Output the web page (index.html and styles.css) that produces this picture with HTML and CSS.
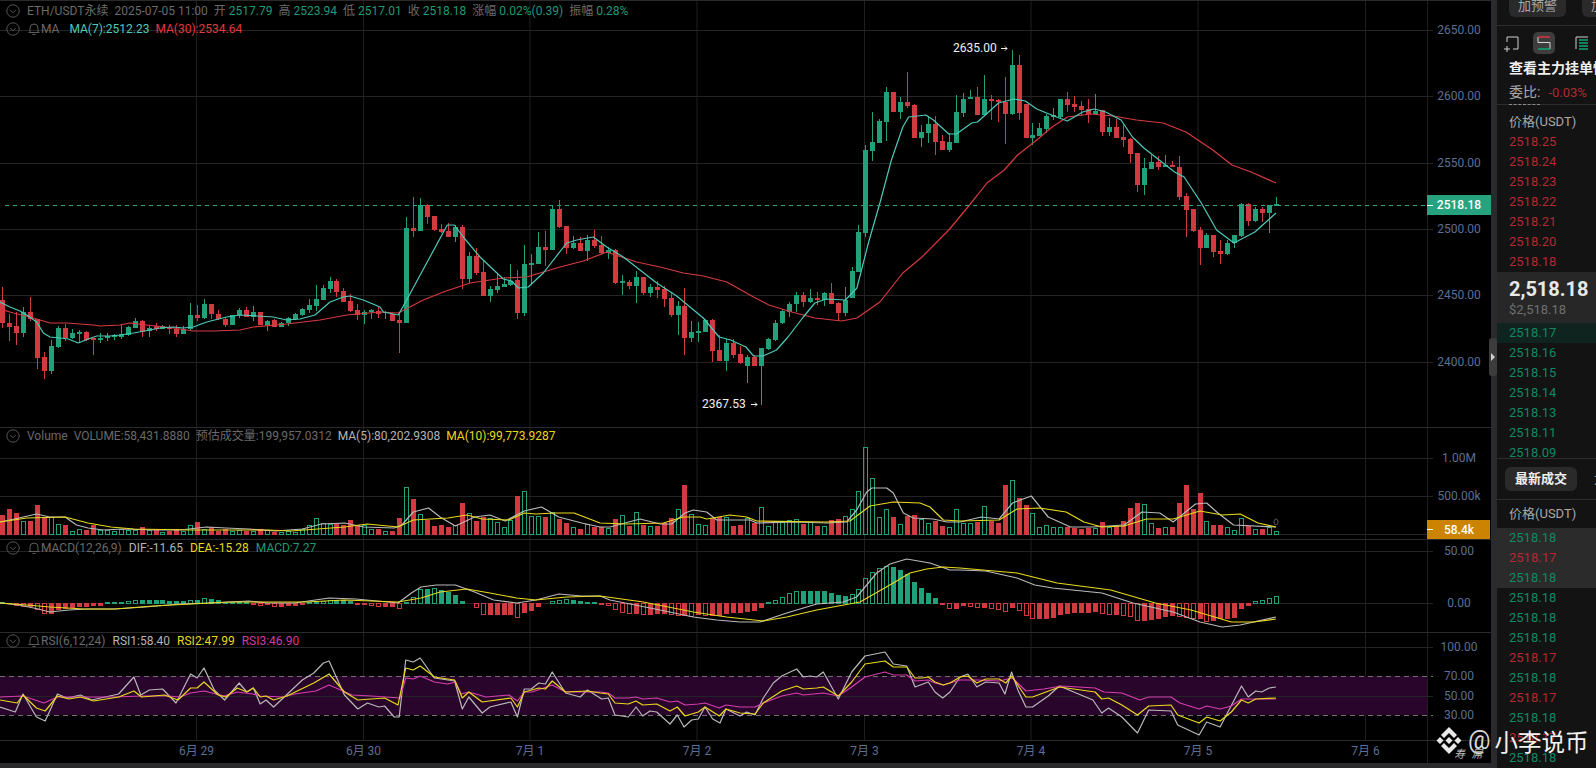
FILE: index.html
```html
<!DOCTYPE html>
<html lang="zh-CN">
<head>
<meta charset="utf-8">
<title>ETH/USDT永续</title>
<link rel="stylesheet" href="styles.css">
</head>
<body>
<svg class="sprite" aria-hidden="true">
  <symbol id="chev" viewBox="0 0 14 14"><circle cx="7" cy="7" r="6.2" fill="none" stroke="#565656"/><path d="M4 5.8 7 8.8 10 5.8" fill="none" stroke="#565656"/></symbol>
  <symbol id="bell" viewBox="0 0 14 14"><path d="M1.5 10.5h11M3 10.5V6a4 4 0 0 1 8 0v4.500M5.500 12.500h3" fill="none" stroke="#5e5e5e"/></symbol>
</svg>
<div class="app">
  <main class="chart">
    <section class="pane pane-main">
      <svg class="plot" id="plot-main"></svg>
      <div class="legend">
        <div class="legend-row legend-row-ohlc">
          <svg class="ico"><use href="#chev"/></svg>
          <span class="lbl">ETH/USDT永续</span>
          <span class="lbl">2025-07-05 11:00</span>
          <span class="lbl">开 <b class="up">2517.79</b></span>
          <span class="lbl">高 <b class="up">2523.94</b></span>
          <span class="lbl">低 <b class="up">2517.01</b></span>
          <span class="lbl">收 <b class="up">2518.18</b></span>
          <span class="lbl">涨幅 <b class="up">0.02%(0.39)</b></span>
          <span class="lbl">振幅 <b class="up">0.28%</b></span>
        </div>
        <div class="legend-row">
          <svg class="ico"><use href="#chev"/></svg>
          <svg class="ico ico-bell"><use href="#bell"/></svg>
          <span class="lbl lbl-ma">MA</span>
          <span class="teal">MA(7):2512.23</span>
          <span class="red">MA(30):2534.64</span>
        </div>
      </div>
    </section>
    <section class="pane pane-vol">
      <svg class="plot" id="plot-vol"></svg>
      <div class="legend legend-sub">
        <div class="legend-row legend-row-ohlc">
          <svg class="ico"><use href="#chev"/></svg>
          <span class="lbl">Volume</span>
          <span class="lbl">VOLUME:58,431.8880</span>
          <span class="lbl">预估成交量:199,957.0312</span>
          <span class="white">MA(5):80,202.9308</span>
          <span class="yellow">MA(10):99,773.9287</span>
        </div>
      </div>
    </section>
    <section class="pane pane-macd">
      <svg class="plot" id="plot-macd"></svg>
      <div class="legend legend-sub">
        <div class="legend-row">
          <svg class="ico"><use href="#chev"/></svg>
          <svg class="ico ico-bell"><use href="#bell"/></svg>
          <span class="lbl">MACD(12,26,9)</span>
          <span class="white">DIF:-11.65</span>
          <span class="yellow">DEA:-15.28</span>
          <span class="up">MACD:7.27</span>
        </div>
      </div>
    </section>
    <section class="pane pane-rsi">
      <svg class="plot" id="plot-rsi"></svg>
      <div class="legend legend-sub">
        <div class="legend-row">
          <svg class="ico"><use href="#chev"/></svg>
          <svg class="ico ico-bell"><use href="#bell"/></svg>
          <span class="lbl">RSI(6,12,24)</span>
          <span class="white">RSI1:58.40</span>
          <span class="yellow">RSI2:47.99</span>
          <span class="pink">RSI3:46.90</span>
        </div>
      </div>
    </section>
    <section class="pane-time">
      <svg class="plot" id="plot-time"></svg>
    </section>
  </main>

  <aside class="panel">
    <div class="tools">
      <button class="tool-btn">加预警</button>
      <button class="tool-btn">加预警</button>
    </div>
    <div class="views">
      <svg class="view-ico" viewBox="0 0 22 22"><path d="M5 5h11v12h-5M5 5v5M5 14v6M2 17h6" fill="none" stroke="#cfcfcf" stroke-width="1"/></svg>
      <span class="view-on">
        <svg class="view-ico" viewBox="0 0 22 22"><path d="M5 10.500V5M5 10.500h12M17 10.500V17" fill="none" stroke="#d8d8d8"/><path d="M5 5h12" fill="none" stroke="#d9363c" stroke-width="1.500"/><path d="M5 17h12" fill="none" stroke="#12a777" stroke-width="1.500"/></svg>
      </span>
      <svg class="view-ico view-last" viewBox="0 0 22 22"><path d="M5 5h12M5 5v12" fill="none" stroke="#cfcfcf"/><path d="M8 8h9M8 11h9M8 14h9M8 17h9" fill="none" stroke="#12a777" stroke-width="1.300"/></svg>
    </div>
    <div class="book-title">查看主力挂单情况</div>
    <div class="ratio"><span class="ratio-lbl">委比:</span><span class="ask">-0.03%</span></div>
    <div class="col-head col-head-book">价格(USDT)</div>
    <ul class="rows">
      <li class="ask">2518.25</li>
      <li class="ask">2518.24</li>
      <li class="ask">2518.23</li>
      <li class="ask">2518.22</li>
      <li class="ask">2518.21</li>
      <li class="ask">2518.20</li>
      <li class="ask">2518.18</li>
    </ul>
    <div class="mid">
      <div class="mid-price">2,518.18</div>
      <div class="mid-usd">$2,518.18</div>
    </div>
    <ul class="rows rows-bid">
      <li class="bid bid-top">2518.17</li>
      <li class="bid">2518.16</li>
      <li class="bid">2518.15</li>
      <li class="bid">2518.14</li>
      <li class="bid">2518.13</li>
      <li class="bid">2518.11</li>
      <li class="bid">2518.09</li>
    </ul>
    <div class="tabs"><span class="tab-on">最新成交</span><span class="tab-next">大额成交</span></div>
    <div class="col-head col-head-trades">价格(USDT)</div>
    <ul class="rows">
      <li class="bid hl">2518.18</li>
      <li class="ask hl">2518.17</li>
      <li class="bid hl">2518.18</li>
      <li class="bid">2518.18</li>
      <li class="bid">2518.18</li>
      <li class="bid">2518.18</li>
      <li class="ask">2518.17</li>
      <li class="bid">2518.18</li>
      <li class="ask">2518.17</li>
      <li class="bid">2518.18</li>
      <li class="ask">2518.17</li>
      <li class="bid">2518.18</li>
    </ul>
  </aside>

  <div class="handle"><i class="handle-arrow"></i></div>

  <div class="watermark">
    <svg class="wm-logo" viewBox="0 0 28 28"><path d="M14 0l8 8-3 3-5-5-5 5-3-3zM5 10l3.500 3.500L5 17l-3.500-3.500zM23 10l3.500 3.500L23 17l-3.500-3.500zM14 10l3.500 3.500L14 17l-3.500-3.500zM9 16l5 5 5-5 3 3-8 8-8-8z" fill="#e8e8e8"/></svg>
    <span class="wm-at">@</span>
    <span class="wm-name">小李说币</span>
    <span class="wm-sub">寿 屌</span>
  </div>
</div>
<script src="chart.js"></script>
</body>
</html>
```
FILE: styles.css
```css
* { box-sizing: border-box; }
html, body { margin: 0; padding: 0; background: #2a2a2c; }
body { width: 1596px; height: 768px; overflow: hidden; font-family: Roboto, "Noto Sans CJK SC", sans-serif; font-size: 12px; }
.sprite { position: absolute; width: 0; height: 0; }

.app { position: relative; display: flex; width: 1596px; height: 768px; gap: 6px; background: #2a2a2c; }

/* chart */
.chart { display: flex; flex-direction: column; width: 1491px; height: 763px; background: #000; border-top: 1px solid #2a2a2c; }
.pane { position: relative; border-bottom: 1px solid #2a2a2c; }
.pane-main { height: 427px; }
.pane-vol { height: 112px; }
.pane-macd { height: 93px; }
.pane-rsi { height: 108px; }
.pane-time { position: relative; height: 22px; }
.plot { position: absolute; left: 0; top: 0; width: 1491px; height: 100%; display: block; }

.legend { position: absolute; left: 6px; top: 1px; display: flex; flex-direction: column; line-height: 18px; white-space: nowrap; }
.legend-sub { top: -1px; }
.legend-row { display: flex; align-items: center; gap: 7px; height: 18px; }
.legend-row-ohlc { gap: 6px; }
.legend-row-ohlc .ico { margin-right: 1px; }
.ico { width: 14px; height: 14px; flex: none; }
.ico-bell { margin-right: -7px; }
.lbl { color: #6a6a6a; }
.lbl-ma { margin-right: 3px; }
.legend b { font-weight: 400; }
.up { color: #1f9a75; }
.teal { color: #4fc9ba; margin-right: -1px; }
.red { color: #e0393e; }
.white { color: #b5b5b5; }
.yellow { color: #e9d91c; }
.pink { color: #d13aa6; }

/* svg text */
.axis-text { font: 12px Roboto, "Noto Sans CJK SC", sans-serif; fill: #5c6f94; text-anchor: middle; dominant-baseline: central; }
.tag-text { font: 500 12px Roboto, sans-serif; fill: #fff; text-anchor: middle; dominant-baseline: central; }
.note-text { font: 12px Roboto, sans-serif; fill: #f2f2f2; dominant-baseline: central; }

/* panel */
.panel { width: 99px; height: 768px; background: #131313; overflow: hidden; white-space: nowrap; color: #a8a8a8; font-size: 13px; }
.tools { display: flex; gap: 16px; height: 26px; padding: 0 0 8px 12px; border-bottom: 1px solid #2e2e2e; align-items: flex-end; }
.tool-btn { flex: none; width: 57px; height: 28px; margin: 0; padding: 3px 0 0; border: 0; border-radius: 6px; background: #2a2a2a; color: #a8a8a8; font: 13px Roboto, "Noto Sans CJK SC", sans-serif; }
.views { display: flex; align-items: center; height: 30px; padding: 4px 0 0 5px; gap: 9px; }
.view-ico { width: 22px; height: 22px; display: block; flex: none; }
.view-last { margin-left: 7px; }
.view-on { width: 22px; height: 22px; border-radius: 5px; background: #3d3d3d; flex: none; }
.book-title { height: 24px; line-height: 24px; padding-left: 12px; color: #f0f0f0; font-size: 14px; font-weight: 700; }
.ratio { display: flex; align-items: center; gap: 8px; height: 25px; padding-left: 12px; border-bottom: 1px solid #2e2e2e; }
.ratio-lbl { font-size: 14px; color: #a8a8a8; height: 25px; line-height: 24px; border-bottom: 1px dashed #8a8a8a; }
.col-head { padding-left: 12px; line-height: 20px; color: #a8a8a8; }
.col-head-book { padding-top: 7px; }
.col-head-trades { height: 28px; padding-top: 4px; }
.rows { list-style: none; margin: 0; padding: 0; }
.rows li { height: 20px; line-height: 20px; padding-left: 12px; }
.ask { color: #b22a30; }
.bid { color: #0e8a62; }
.hl { background: #2b2b2b; }
.mid { height: 51px; padding: 5px 0 0 12px; background: #272727; }
.mid-price { font-size: 20px; font-weight: 700; line-height: 24px; color: #e8e8e8; }
.mid-usd { font-size: 13px; line-height: 18px; color: #6f6f6f; }
.rows-bid { height: 135px; overflow: hidden; }
.bid-top { background: #0f241e; }
.tabs { display: flex; gap: 17px; height: 42px; padding: 8px 0 0 8px; border-top: 1px solid #2e2e2e; border-bottom: 1px solid #2e2e2e; }
.tab-on { flex: none; width: 72px; height: 24px; line-height: 24px; text-align: center; border-radius: 6px; background: #2a2a2a; color: #f0f0f0; font-weight: 700; }
.tab-next { flex: none; line-height: 24px; color: #a8a8a8; }

/* collapse handle */
.handle { position: absolute; left: 1489px; top: 338px; width: 8px; height: 38px; border-radius: 3px; background: #3c3c3c; display: flex; align-items: center; justify-content: center; }
.handle-arrow { width: 0; height: 0; border-style: solid; border-width: 4px 0 4px 4px; border-color: transparent transparent transparent #d0d0d0; }

/* watermark */
.watermark { position: absolute; left: 1435px; top: 727px; width: 160px; height: 34px; display: flex; align-items: flex-start; color: #f2f2f2; font-family: "Noto Sans CJK SC", sans-serif; }
.wm-logo { width: 28px; height: 28px; flex: none; }
.wm-at { margin-left: 5px; font: 25px/28px Roboto, sans-serif; color: #d8d8d8; }
.wm-name { margin-left: 4px; font-size: 23.500px; line-height: 28px; }
.wm-sub { position: absolute; left: 19px; top: 19px; font-size: 11px; line-height: 14px; font-style: italic; color: #bdbdbd; letter-spacing: 2px; }
```
FILE: chart.js
```js
// Hourly candles traced from the reference: [green?, wickTop, bodyTop, bodyBottom, wickBottom] in page pixels.
var candles = [
[0,287,300,323,328],[0,314,323,327,341],[0,312,326,333,345],[1,307,312,333,337],[0,297,312,319,321],[0,319,319,358,369],[0,352,357,371,379],[1,340,346,371,374],
[1,326,328,347,348],[0,324,328,338,341],[1,329,333,338,339],[1,330,332,334,343],[0,331,332,340,341],[0,338,338,340,355],[1,333,338,340,343],[1,333,336,338,341],
[1,334,335,337,340],[1,325,334,337,339],[1,326,327,335,336],[1,318,321,328,328],[0,320,321,332,337],[1,325,328,331,337],[0,323,326,329,331],[1,325,326,329,329],
[0,325,327,329,334],[0,325,329,334,337],[1,326,329,334,334],[1,303,315,329,331],[0,305,315,318,321],[1,299,304,318,319],[0,304,304,314,319],[0,310,314,319,320],
[0,317,319,325,327],[1,315,315,325,325],[1,308,310,315,318],[0,307,310,317,317],[1,306,312,317,321],[0,312,312,325,325],[1,320,321,325,331],[0,319,320,327,327],
[1,322,323,327,327],[1,317,318,323,326],[1,313,314,319,320],[1,308,309,315,316],[1,299,305,310,313],[1,285,299,306,311],[1,285,288,300,300],[1,277,281,289,293],
[0,279,281,292,297],[0,288,291,302,302],[0,294,301,311,312],[0,304,310,315,320],[1,310,312,315,324],[1,309,310,312,319],[0,307,311,314,318],[1,311,312,313,319],
[0,313,314,321,321],[0,313,320,323,353],[1,217,228,323,323],[0,197,228,231,237],[1,198,205,231,231],[0,204,205,217,224],[0,216,216,230,231],[0,224,229,232,233],
[0,223,231,237,237],[1,225,227,237,242],[0,225,227,279,289],[1,252,256,279,283],[0,248,256,273,275],[0,261,272,296,296],[1,286,289,296,302],[1,273,286,290,293],
[1,277,284,287,287],[1,264,281,285,286],[0,270,280,313,319],[1,245,264,313,316],[1,254,263,265,285],[1,232,247,264,264],[0,231,247,250,266],[1,206,209,250,250],
[0,200,209,227,228],[0,226,226,248,254],[1,236,243,248,249],[0,237,243,251,251],[1,235,240,251,261],[0,230,240,246,248],[0,236,245,253,255],[1,247,250,253,259],
[0,249,250,283,284],[1,275,281,283,295],[0,280,282,286,289],[1,271,277,286,303],[0,277,277,293,295],[1,284,287,293,297],[0,281,287,290,298],[0,286,289,299,307],
[0,293,298,315,317],[1,301,306,315,335],[0,288,306,338,355],[1,321,332,338,342],[1,322,331,333,342],[1,319,320,332,332],[0,319,320,351,362],[0,335,350,361,361],
[1,339,343,361,371],[0,339,343,355,358],[0,346,354,363,364],[1,355,357,366,383],[0,355,357,366,366],[1,348,348,366,405],[1,338,339,349,350],[1,320,323,340,341],
[1,309,311,323,324],[1,302,304,312,317],[1,292,295,304,312],[0,292,295,302,307],[1,289,298,302,303],[0,292,298,300,305],[1,292,293,300,306],[0,283,293,304,304],
[0,302,303,313,321],[1,287,300,313,316],[1,267,271,298,298],[1,225,232,272,272],[1,145,150,233,237],[1,112,142,151,161],[1,119,121,143,143],[1,87,92,122,141],
[0,92,92,112,112],[1,97,102,112,119],[0,72,102,106,108],[0,104,105,138,138],[1,125,132,138,147],[1,116,124,133,143],[0,116,124,142,155],[0,135,141,150,150],
[1,133,142,150,152],[1,95,112,143,143],[1,93,99,113,117],[1,90,97,99,99],[0,87,97,115,115],[1,75,99,115,115],[0,95,99,101,120],[0,99,100,102,122],
[0,77,102,114,144],[1,50,65,114,115],[0,55,65,113,120],[0,104,104,138,138],[1,123,135,138,145],[1,123,128,136,136],[1,114,116,129,133],[1,108,115,117,120],
[1,99,99,117,119],[0,92,99,105,112],[0,96,104,107,112],[0,101,106,110,116],[0,99,109,114,123],[1,94,111,114,114],[0,110,110,132,136],[1,118,127,132,136],
[0,119,127,138,138],[0,125,137,140,147],[0,138,139,154,163],[0,153,153,185,192],[1,158,168,185,195],[1,155,162,169,169],[0,156,162,167,170],[1,155,165,167,167],
[0,161,165,167,167],[0,156,167,197,200],[0,193,196,210,237],[0,209,209,231,232],[0,227,230,248,265],[1,233,235,248,248],[0,235,235,252,257],[0,240,251,254,264],
[1,240,243,254,255],[1,235,235,243,248],[1,203,204,236,237],[0,203,204,221,226],[1,207,209,221,222],[0,207,209,213,222],[1,205,205,213,233],[1,197,204,206,206]
];

// Volume bar tops (page y), base at 534.
var volTop = [515,509,513,521,521,505,517,517,524,525,531,529,530,525,530,530,531,529,530,530,527,530,530,532,531,529,531,525,522,529,527,531,529,531,530,531,531,529,530,532,
532,531,532,529,525,518,523,524,523,525,520,525,525,529,529,531,531,518,487,499,514,520,526,525,527,525,503,513,521,517,518,522,527,520,496,491,516,516,517,512,519,523,527,529,524,527,
527,528,519,515,526,512,525,526,526,523,518,509,485,514,524,525,518,517,517,526,525,518,523,507,526,521,522,520,519,524,522,526,526,520,519,516,509,491,447,478,517,509,517,524,516,515,519,523,521,526,527,509,
523,523,522,506,521,523,485,480,498,505,513,527,525,527,527,527,528,529,528,528,522,527,526,521,508,503,504,523,528,527,527,503,485,509,493,521,525,525,527,530,518,526,529,529,527,531];

// MACD histogram in pixels from the zero line (positive is up).
var hist = [1,.5,-2,-3,-3,-6,-10,-10,-6,-5,-4,-3,-3,-2,-1.5,1,1,1,2,3,3,3,3,3,2,2,2,3,3,5,4,3,1,1,1,1,-1,-2,-1,-3,-3,-2,-2,-1,1,1,2,3,3,3,
2,-1,-1,-2,-3,-3,-3,-5,1,6,14,14,15,13,11,8,2,0,-4,-11,-11,-11,-11,-11,-14,-9,-7,-3,0,2,3,4,3,2,1,1,-1,-2,
-6,-9,-10,-10,-11,-11,-10,-10,-11,-12,-12,-13,-11,-12,-12,-12,-10,-9,-9,-8,-7,-4,1,3,6,10,12,12,12,12,12,10,8,7,9,14,25,31,35,37,36,33,29,21,15,10,5,-1,-5,-5,
-2,-3,-4,-4,-5,-6,-8,-4,-7,-12,-15,-15,-15,-14,-11,-10,-9,-9,-9,-8,-10,-11,-11,-12,-13,-17,-17,-16,-15,-13,-12,-13,-14,-15,-15,-18,-17,-15,-15,-14,-5,-2,2,3,5,7];

// Traced line samples: each run is [xOrigin, xScale, x,y, x,y, ...].
function line() {
  var out = [];
  for (var a = 0; a < arguments.length; a++) {
    var r = arguments[a];
    for (var k = 2; k < r.length; k += 2) out.push((r[0] + r[k] / r[1]).toFixed(1) + ',' + r[k + 1]);
  }
  return out.join(' ');
}

var ma7 = line(
  [0,3, 0,302,30,307,60,311,85,316,110,322,130,333,150,337,180,338,205,339,235,343,265,339,290,336,330,336,360,335,400,333,450,330,480,328,520,327,550,328,580,327,620,322,680,317,720,315,770,316,820,317,860,320,900,319,945,315,990,302,1030,297,1050,296,1090,300,1140,307],
  [370,3, 40,312,85,315,105,303,232,225,253,225,280,237,330,257,400,279,425,281,445,288,475,287,520,273,590,243,620,240,670,237,710,247,760,257,860,283,920,296,1000,318],
  [700,2.613, 50,337,80,340,120,347,140,356,165,356,200,350,230,337,270,317,300,303,330,299,380,300,410,288,440,243,470,203,500,160,530,127,545,117,590,115,610,120,650,134,670,134,710,123,725,122,780,103,820,99,850,101,880,109,925,116,960,121,1000,112,1030,109,1060,112,1100,120,1130,137,1160,148,1200,160,1240,172,1265,177,1310,203,1350,230,1395,243,1450,232,1505,213]
);
var ma30 = line(
  [0,3, 0,309,40,313,100,318,150,323,200,323,280,325,300,326,360,325,390,323,440,325,520,328,580,331,640,331,720,330,760,327,860,324,960,320,1040,315,1140,312],
  [370,3, 85,313,160,300,220,292,300,283,400,278,470,277,570,267,640,261,710,252,800,262,870,267,940,273,1000,276],
  [700,2.613, 70,282,140,297,180,305,240,312,300,318,370,321,410,318,470,302,530,273,580,257,650,230,700,207,750,183,795,170,830,155,880,140,920,127,960,117,1020,114,1080,116,1140,120,1210,123,1270,132,1340,150,1390,165,1440,172,1505,183]
);
var volMa5 = line(
  [0,2.613, 0,522,50,518,95,514,130,517,170,517,200,525,230,528,270,530,320,529,400,530,470,530,540,527,590,528,650,529,720,531,790,529,840,524,900,523,950,527,1030,528,1050,525,1080,512,1120,508,1150,517,1190,526,1240,517,1280,515,1320,521,1370,511,1415,507,1460,517,1520,523,1568,527],
  [560,3, 150,527,240,519,300,524,335,524,375,513,400,510,440,512,470,520,570,520,590,523,700,522,800,523,860,522,890,510,920,492,935,488,980,488,1000,493,1030,513,1060,518,1120,519,1160,522,1200,522],
  [700,2.24, 630,517,670,519,700,503,742,496,780,517,830,527,880,527,950,525,990,512,1030,513,1060,522,1110,504,1135,503,1160,513,1195,525,1290,527]
);
var volMa10 = line(
  [0,2.613, 0,522,70,518,170,517,230,523,290,527,350,529,500,530,700,530,760,531,900,527,960,524,1040,527,1080,520,1170,518,1220,515,1260,519,1330,520,1370,513,1400,514,1450,513,1500,513,1568,523],
  [560,3, 200,524,310,523,370,517,420,517,440,519,510,515,560,517,590,521,800,522,870,521,930,506,1000,502,1080,503,1110,507,1150,520,1200,521],
  [700,2.24, 670,520,710,509,760,508,820,512,860,522,900,527,950,526,1000,519,1060,519,1120,511,1170,515,1210,514,1250,523,1290,527]
);
var dif = line(
  [0,2.613, 0,603,50,605,100,609,130,612,180,610,230,609,300,609,380,607,470,604,550,603,650,601,700,603,770,603,860,598,930,599,1040,603,1075,593,1100,587,1140,585,1190,585,1240,592,1290,600,1350,603,1400,600,1460,594,1520,596,1568,596],
  [560,3, 150,600,300,610,400,617,470,620,540,622,600,622,680,613,770,604,850,602,890,597,950,573,990,564,1040,559,1110,563,1170,570,1200,570],
  [700,2.24, 640,571,710,578,750,585,790,588,900,593,970,603,1060,612,1120,622,1170,627,1210,625,1290,617]
);
var dea = line(
  [0,2.613, 0,603,70,605,130,607,220,609,300,609,400,606,500,604,600,602,700,602,800,602,900,600,1040,602,1100,598,1150,592,1220,589,1280,593,1350,598,1400,600,1480,597,1568,596],
  [560,3, 250,602,400,612,500,617,610,621,680,617,770,610,900,602,1000,583,1050,573,1100,569,1150,567,1200,568],
  [700,2.24, 710,573,800,583,920,590,1020,603,1100,610,1190,622,1240,622,1290,619]
);
var rsi1 = line(
  [0,2.613, 0,707,40,712,60,694,95,717,118,721,150,694,175,698,210,695,240,700,310,694,350,677,368,695,390,690,425,689,460,703,498,674,515,678,533,668,560,690,587,700,625,683,645,692,662,688,680,704,695,700,715,707,740,698,790,680,820,673,845,663,860,661,900,695,935,709,960,703,990,707,1005,706,1030,717,1043,717,1060,660,1080,662,1098,658,1135,678,1188,681,1208,709,1225,697,1260,713,1280,707,1335,702,1352,717,1370,689,1388,689,1408,683,1425,684,1443,672,1478,693,1516,697,1535,690,1568,698],
  [560,3, 125,699,145,698,165,715,205,717,228,707,248,716,270,711,290,712,330,724,352,715,372,727,395,720,415,719,435,707,458,719,480,723,498,709,540,716,560,712,585,715,610,698,640,683,665,676,710,669,730,677,750,676,770,677,790,672,835,699,875,672,915,656,975,652,1000,664,1040,666,1065,687,1105,682,1125,692,1148,698,1170,692,1200,677],
  [700,2.24, 600,674,620,687,640,682,670,683,683,694,698,672,712,690,730,707,745,707,780,696,805,686,880,700,900,713,915,708,945,717,980,733,1005,710,1055,711,1070,725,1118,735,1135,722,1165,727,1213,686,1228,697,1245,691,1258,692,1275,688,1290,687]
);
var rsi2 = line(
  [0,2.613, 0,700,45,703,60,695,95,708,118,711,150,696,180,699,210,697,245,701,310,697,350,691,370,697,430,695,465,700,498,688,515,688,533,682,570,695,590,697,620,688,645,692,662,688,680,697,695,696,715,700,750,696,820,683,860,674,900,692,935,700,1005,698,1040,705,1060,668,1080,670,1098,666,1135,677,1188,680,1208,698,1225,692,1260,702,1335,698,1352,707,1370,692,1408,688,1425,689,1443,681,1478,692,1535,691,1568,693],
  [560,3, 145,694,165,703,205,704,228,701,248,705,290,704,330,711,352,707,375,716,415,712,435,707,478,716,498,709,540,713,585,714,610,703,665,691,710,686,730,689,770,688,790,687,835,696,875,682,915,664,975,661,1000,667,1040,667,1065,678,1085,678,1105,677,1125,682,1150,685,1170,683,1200,677],
  [700,2.24, 600,676,620,683,640,679,670,679,685,683,698,676,730,697,745,697,775,692,805,687,885,692,900,699,915,698,945,705,980,715,1005,706,1055,705,1070,715,1118,723,1135,717,1165,721,1190,712,1213,700,1228,703,1245,699,1290,698]
);
var rsi3 = line(
  [0,2.613, 0,697,60,696,115,703,150,697,210,697,300,697,370,696,440,696,470,697,498,693,533,691,585,696,620,692,660,694,680,696,740,697,770,694,825,691,860,685,920,695,970,696,1045,698,1060,678,1080,679,1098,676,1135,682,1170,684,1190,682,1205,694,1225,692,1270,697,1330,695,1352,701,1370,692,1390,692,1443,685,1478,692,1568,692],
  [560,3, 145,693,165,698,205,698,228,697,248,699,290,698,330,702,352,701,375,705,415,704,435,703,478,708,498,705,540,707,585,707,610,703,665,696,710,693,730,695,790,693,835,696,875,687,915,677,975,672,1000,675,1040,675,1065,681,1105,680,1125,683,1150,685,1200,680],
  [700,2.24, 620,680,670,681,700,678,730,691,770,689,810,686,885,688,905,692,945,693,985,700,1005,697,1055,697,1075,703,1118,709,1135,706,1165,709,1190,706,1213,699,1290,699]
);

var GREEN = '#21a07a', RED = '#d13b40', GRID = '#242427', VLINE = '#1f1f22';
var AXIS_X = 1427.5, DAYS = [196.5, 363.5, 530, 697, 864.5, 1031, 1198, 1365.5];
function cx(i) { return Math.round(2.4 + 6.96 * i); }

function rect(x, y, w, h, fill) { return '<rect x="' + x + '" y="' + y + '" width="' + w + '" height="' + Math.max(h, 1) + '" fill="' + fill + '" shape-rendering="crispEdges"/>'; }
function outline(x, y, w, h, stroke) { return '<rect x="' + (x + .5) + '" y="' + (y + .5) + '" width="' + (w - 1) + '" height="' + Math.max(h - 1, 1) + '" fill="none" stroke="' + stroke + '" shape-rendering="crispEdges"/>'; }
function hline(y, x2, c) { return '<path d="M0 ' + y + 'H' + (x2 || 1433) + '" stroke="' + (c || GRID) + '"/>'; }
function poly(p, c, w) { return '<polyline points="' + p + '" fill="none" stroke="' + c + '" stroke-width="' + (w || 1.2) + '" stroke-linejoin="round"/>'; }
function text(x, y, s, cls) { return '<text x="' + x + '" y="' + y + '" class="' + cls + '">' + s + '</text>'; }
function verticals(y1, y2) {
  var s = '';
  DAYS.forEach(function (x) { s += '<path d="M' + x + ' ' + y1 + 'V' + y2 + '" stroke="' + VLINE + '"/>'; });
  return s + '<path d="M' + AXIS_X + ' ' + y1 + 'V' + y2 + '" stroke="' + VLINE + '"/>';
}
function draw(id, top, height, body) {
  var svg = document.getElementById(id);
  svg.setAttribute('viewBox', '0 ' + top + ' 1491 ' + height);
  svg.innerHTML = body;
}

// Main pane
var m = verticals(1, 427);
[[2650, 30.5], [2600, 96.5], [2550, 163.5], [2500, 229.5], [2450, 295.5], [2400, 362.5]].forEach(function (g) {
  m += hline(g[1]) + text(1459, g[1] - 1, g[0] + '.00', 'axis-text');
});
candles.forEach(function (c, i) {
  var x = cx(i), col = c[0] ? GREEN : RED;
  m += rect(x, c[1], 1, c[4] - c[1], col) + rect(x - 2, c[2], 5, c[3] - c[2], col);
});
m += poly(ma30, '#d63a3e') + poly(ma7, '#4fc9ba');
m += '<path d="M5 205.500H1427" stroke="#2aa884" stroke-dasharray="4 4"/>';
m += rect(1427, 195, 64, 20, '#26a37e') + rect(1427, 205, 6, 1, '#fff') + text(1459, 204.5, '2518.18', 'tag-text');
m += text(953, 48, '2635.00', 'note-text') + '<path d="M1001 48.500h6M1005 46.500l2 2-2 2" stroke="#eee" fill="none"/>';
m += text(702, 404, '2367.53', 'note-text') + '<path d="M751 404.500h6M755 402.500l2 2-2 2" stroke="#eee" fill="none"/>';
draw('plot-main', 1, 426, m);

// Volume pane
var v = verticals(428, 539);
v += hline(458.5) + hline(496.5) + hline(534.5, 1427);
v += text(1459, 458, '1.00M', 'axis-text') + text(1459, 496, '500.00k', 'axis-text');
volTop.forEach(function (t, i) {
  var x = cx(i) - 2;
  v += candles[i][0] ? outline(x, t, 5, 534 - t + 1, GREEN) : rect(x, t, 5, 534 - t + 1, RED);
});
v += poly(volMa5, '#b9b9b9') + poly(volMa10, '#e9d91c');
v += '<ellipse cx="1276" cy="522" rx="2" ry="3" fill="none" stroke="#555"/>';
v += rect(1427, 520, 63, 19, '#cc8400') + rect(1427, 529, 6, 1, '#fff') + text(1459, 529.5, '58.4k', 'tag-text');
draw('plot-vol', 428, 111, v);

// MACD pane
var d = verticals(540, 632);
d += hline(551.5) + hline(603.5);
d += text(1459, 551, '50.00', 'axis-text') + text(1459, 603, '0.00', 'axis-text');
hist.forEach(function (h, i) {
  if (i >= candles.length || h === 0) return;
  var x = cx(i) - 2, col = h > 0 ? GREEN : RED, p = i ? hist[i - 1] : 0;
  var hollow = h > 0 ? h > p : h < p, a = Math.abs(h);
  var y = h > 0 ? 603 - a : 603;
  d += hollow ? outline(x, y, 5, a + 1, col) : rect(x, y, 5, a + 1, col);
});
d += poly(dif, '#b9b9b9') + poly(dea, '#e9d91c');
draw('plot-macd', 540, 92, d);

// RSI pane
var r = verticals(633, 740);
r += rect(0, 676, 1427, 39, '#29042b');
r += hline(647.5) + hline(696.5);
r += '<path d="M0 676.500H1433M0 715.500H1433" stroke="#707070" stroke-dasharray="5 4"/>';
r += text(1459, 647, '100.00', 'axis-text') + text(1459, 676, '70.00', 'axis-text') + text(1459, 696, '50.00', 'axis-text') + text(1459, 715, '30.00', 'axis-text');
r += poly(rsi1, '#b9b9b9') + poly(rsi3, '#d63fae') + poly(rsi2, '#e9d91c');
draw('plot-rsi', 633, 107, r);

// Time axis
var t = '';
['6月 29', '6月 30', '7月 1', '7月 2', '7月 3', '7月 4', '7月 5', '7月 6'].forEach(function (s, i) {
  t += text(DAYS[i], 751, s, 'axis-text');
});
t += '<path d="M' + AXIS_X + ' 741V763" stroke="' + VLINE + '"/>';
draw('plot-time', 741, 22, t);
```
